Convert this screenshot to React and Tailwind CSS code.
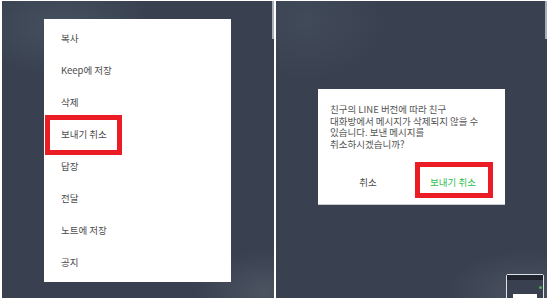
import React from 'react';

const menuItems = ['복사', 'Keep에 저장', '삭제', '보내기 취소', '답장', '전달', '노트에 저장', '공지'];

const font = { fontFamily: '"Noto Sans CJK KR", "Noto Sans", sans-serif' };

const RedBox = ({ className }) => (
  <div className={`absolute border-[5px] border-[#ec1c24] pointer-events-none ${className}`} />
);

const Panel = ({ children, cloud, className }) => (
  <div className={`relative h-[297px] overflow-hidden bg-[#394150] ${cloud} ${className}`}>
    {/* scroll indicator */}
    <div className="absolute right-0 top-0 w-[2px] h-[38px] bg-[#a9aebb]" />
    {children}
  </div>
);

const App = () => {
  return (
    <div className="w-[550px] h-[300px] bg-white pt-[1px] pl-[2px] flex gap-[2px]" style={font}>
      <Panel
        className="w-[272px] pl-[42px] pt-[18px]"
        cloud="bg-[radial-gradient(ellipse_90px_50px_at_60px_25px,#45505e_0%,transparent_100%),radial-gradient(ellipse_70px_40px_at_262px_290px,#4b5260_0%,transparent_100%)]"
      >
        <div className="w-[187px] h-[263px] bg-white pt-[3px] flex flex-col">
          {menuItems.map((item) => (
            <div key={item} className="relative h-[32px] flex items-center pl-[17px] text-[9.5px] text-[#4d4d4d]">
              {item}
              {item === '보내기 취소' && <RedBox className="left-[1px] top-[-3px] w-[77px] h-[40px]" />}
            </div>
          ))}
        </div>
      </Panel>

      <Panel
        className="w-[271px] pl-[42px] pt-[88px]"
        cloud="bg-[radial-gradient(ellipse_80px_60px_at_30px_20px,#414a58_0%,transparent_100%),radial-gradient(ellipse_80px_40px_at_250px_290px,#4a5260_0%,transparent_100%)]"
      >
        <div className="w-[187px] h-[115px] bg-white shadow-[0_1px_0_#c9ccd2] flex flex-col">
          <p className="pt-[15px] pl-[12px] pr-[6px] text-[9.5px] leading-[11.7px] text-[#555]">
            친구의 LINE 버전에 따라 친구
            <br />
            대화방에서 메시지가 삭제되지 않을 수
            <br />
            있습니다. 보낸 메시지를
            <br />
            취소하시겠습니까?
          </p>
          <div className="mt-[13px] h-[36px] flex items-center text-[9.5px]">
            <div className="w-[100px] text-center text-[#4d4d4d]">취소</div>
            <div className="relative w-[76px] ml-[-3px] text-center text-[#2fbf4f]">
              보내기 취소
              <RedBox className="left-0 top-[-13px] w-[78px] h-[36px]" />
            </div>
          </div>
        </div>

        {/* mini screen thumbnail */}
        <div className="absolute left-[230px] top-[273px] w-[38px] h-[30px] border border-[#dfe2e8] rounded-t-[2px] bg-[#394150]">
          <div className="h-[5px] bg-[#20242f]" />
          <div className="absolute right-[1px] top-[11px] w-[3px] h-[3px] rounded-full bg-[#4caf50]" />
          <div className="absolute left-[6px] top-[19px] w-[24px] h-[10px] bg-white" />
        </div>
      </Panel>
    </div>
  );
};

export default App;
